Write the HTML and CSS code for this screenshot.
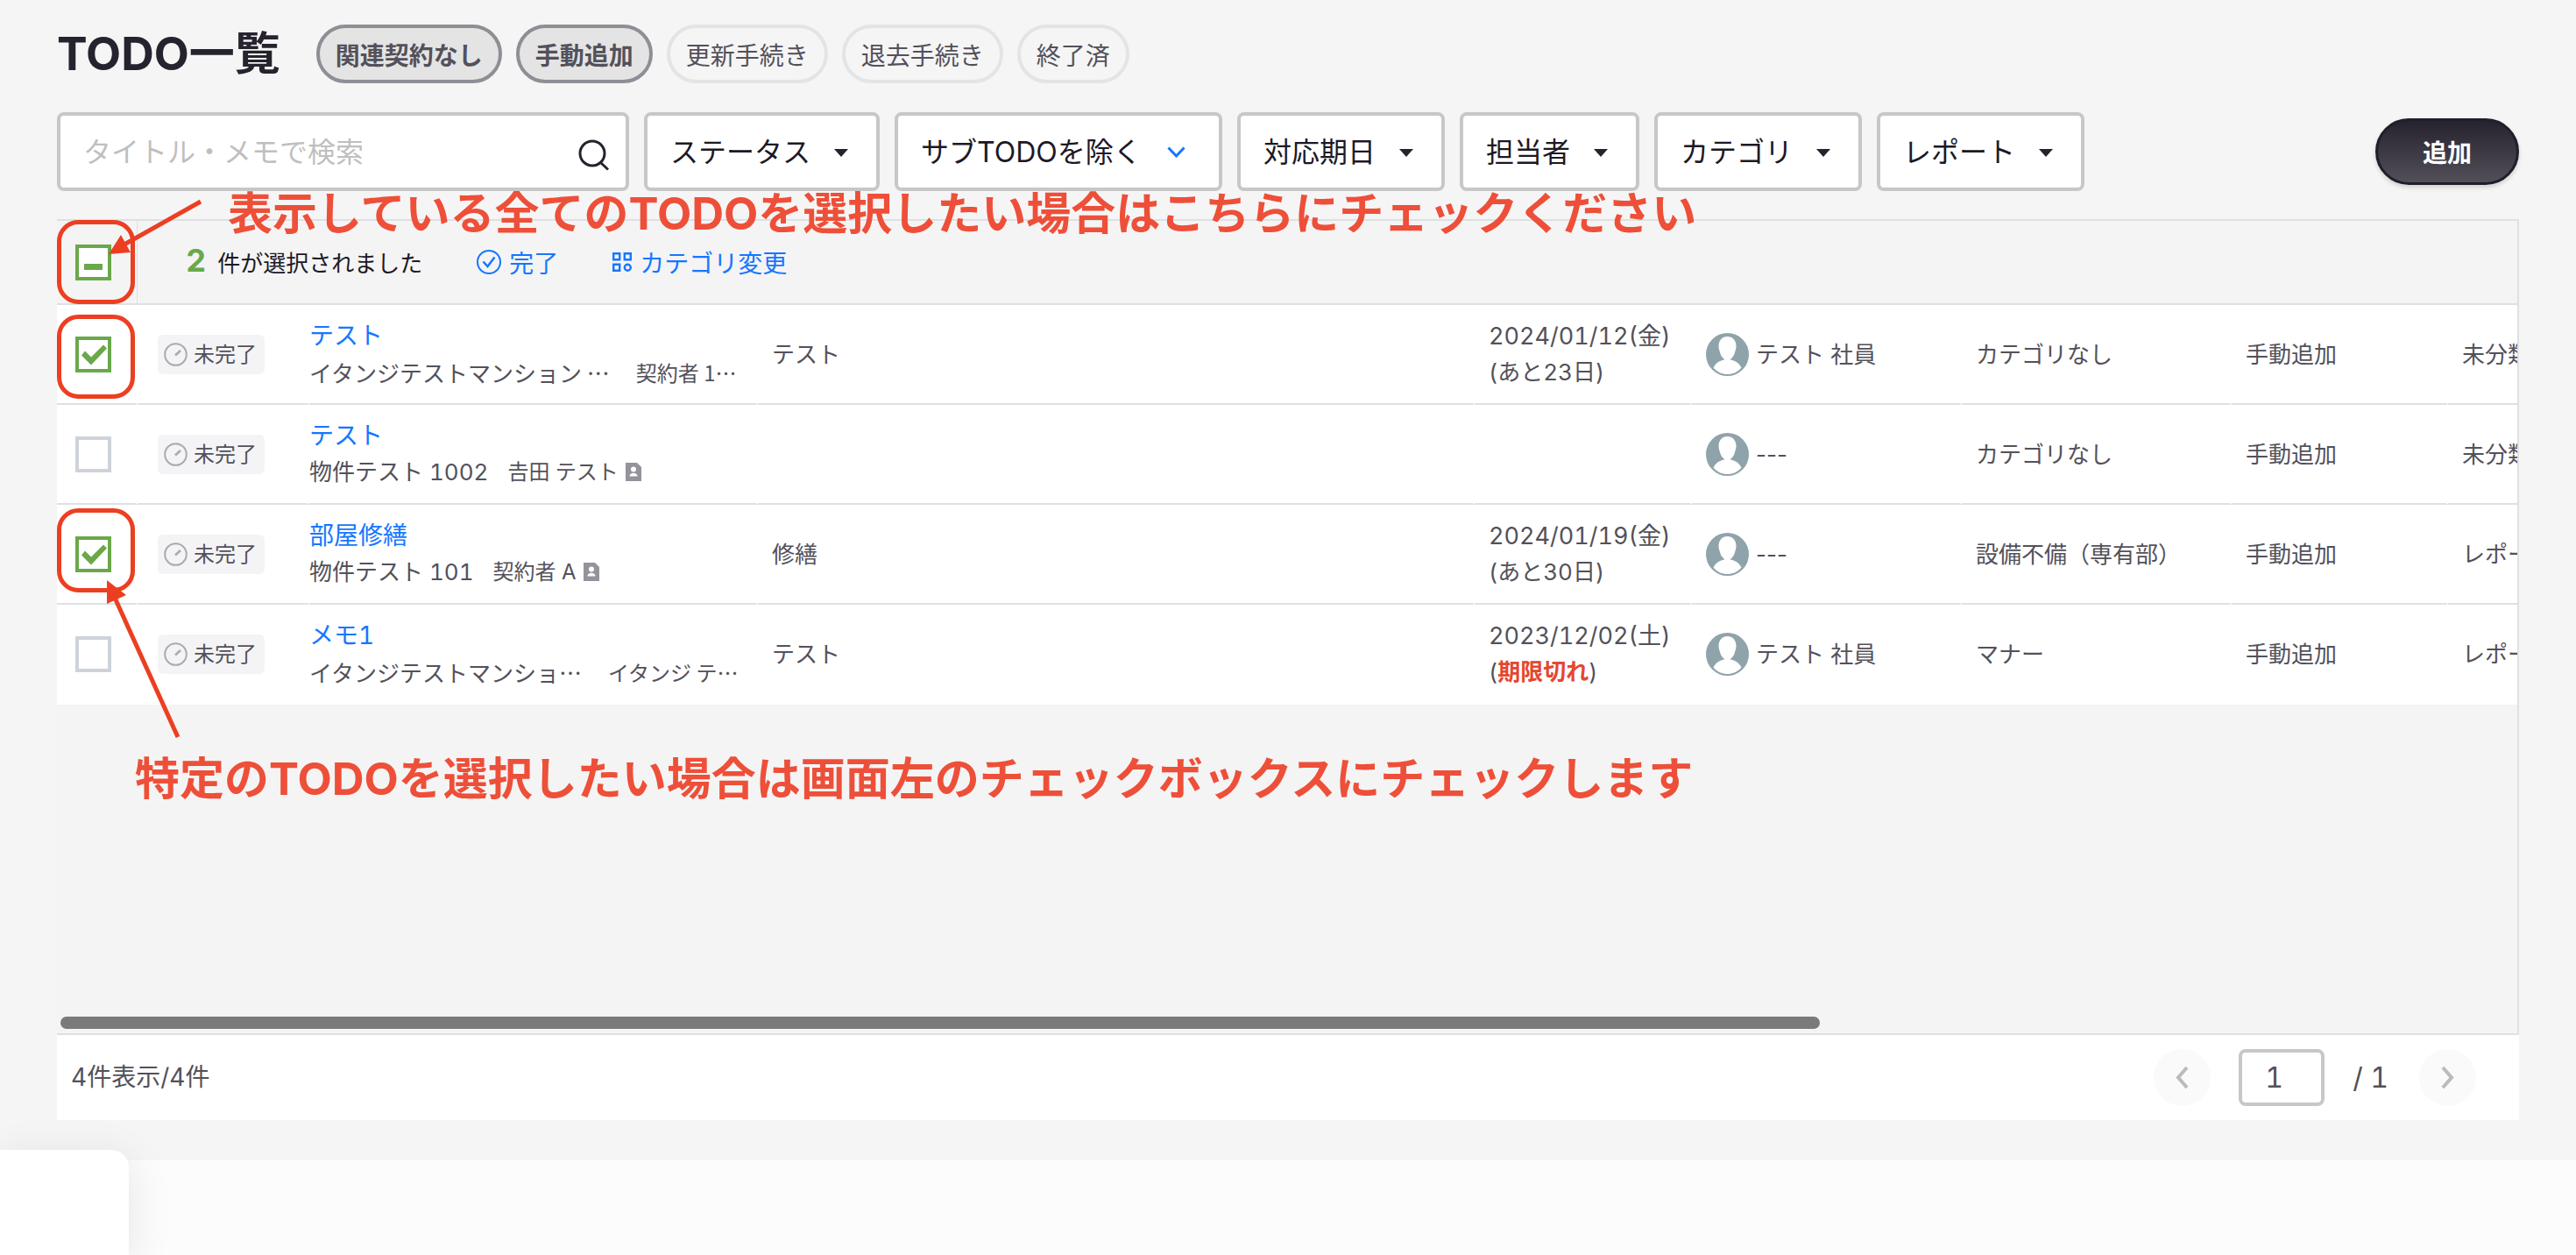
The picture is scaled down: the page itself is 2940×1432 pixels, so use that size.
FILE: index.html
```html
<!DOCTYPE html>
<html lang="ja">
<head>
<meta charset="utf-8">
<title>TODO一覧</title>
<link rel="stylesheet" href="styles.css">
</head>
<body>

<svg class="defs" aria-hidden="true">
  <symbol id="caret" viewBox="0 0 16 9"><path d="M0 0h16L8 9z" fill="#26232e"/></symbol>
  <symbol id="clock" viewBox="0 0 27 27">
    <circle cx="13.5" cy="13.5" r="12.3" fill="none" stroke="#aaa" stroke-width="2"/>
    <path d="M13 14.500l6-5.500" stroke="#aaa" stroke-width="2.600"/>
  </symbol>
  <symbol id="avatar" viewBox="0 0 49 49">
    <circle cx="24.500" cy="24.500" r="24.500" fill="#8fa3ab"/>
    <path d="M24.500 4c6 0 10 4.500 10 11 0 3-.8 4.500-1.500 7-.8 3.500-2.500 6-5.500 8.500 5.500.5 10.500 4 13 9-4 5-10 7.500-16 7.500s-12-2.500-16-7.500c2.500-5 7.500-8.500 13-9-3-2.500-4.700-5-5.500-8.500-.7-2.500-1.500-4-1.500-7 0-6.500 4-11 10-11z" fill="#fff"/>
  </symbol>
  <symbol id="contact" viewBox="0 0 18 21">
    <path d="M0 0h13l5 5v16H0z" fill="#94929b"/>
    <circle cx="9" cy="7.500" r="3" fill="#fff"/>
    <path d="M4.500 15.500c0-5 9-5 9 0z" fill="#fff"/>
  </symbol>
</svg>

<main class="page">
  <header class="head">
    <h1>TODO一覧</h1>
    <div class="chips">
      <button type="button" class="chip on">関連契約なし</button>
      <button type="button" class="chip on">手動追加</button>
      <button type="button" class="chip">更新手続き</button>
      <button type="button" class="chip">退去手続き</button>
      <button type="button" class="chip">終了済</button>
    </div>
  </header>

  <form class="filters">
    <div class="search">
      <input type="text" placeholder="タイトル・メモで検索" aria-label="タイトル・メモで検索">
      <svg width="36" height="36" viewBox="0 0 36 36" fill="none" stroke="#26232e" stroke-width="3"><circle cx="16" cy="16" r="14"/><path d="M25.500 26.500l8.500 8"/></svg>
    </div>
    <div class="filter"><select aria-label="ステータス"><option>ステータス</option></select><svg><use href="#caret"/></svg></div>
    <div class="filter wide"><select aria-label="サブTODO"><option>サブTODOを除く</option></select><svg viewBox="0 0 21 13"><path d="M1.500 1.500l9 9.500 9-9.500" fill="none" stroke="#1677ff" stroke-width="3"/></svg></div>
    <div class="filter"><select aria-label="対応期日"><option>対応期日</option></select><svg><use href="#caret"/></svg></div>
    <div class="filter"><select aria-label="担当者"><option>担当者</option></select><svg><use href="#caret"/></svg></div>
    <div class="filter"><select aria-label="カテゴリ"><option>カテゴリ</option></select><svg><use href="#caret"/></svg></div>
    <div class="filter"><select aria-label="レポート"><option>レポート</option></select><svg><use href="#caret"/></svg></div>
    <button type="button" class="add">追加</button>
  </form>

  <section class="list">
    <div class="scroll">
      <table>
        <colgroup>
          <col class="c-check"><col class="c-status"><col class="c-title"><col class="c-memo"><col class="c-date"><col class="c-user"><col class="c-cat"><col class="c-type"><col class="c-report">
        </colgroup>
        <thead>
          <tr>
            <th class="check"><input type="checkbox" class="some" aria-label="すべて選択"></th>
            <th colspan="8">
              <div class="selected">
                <p><b>2</b> 件が選択されました</p>
                <button type="button" class="action">
                  <svg width="28" height="28" viewBox="0 0 28 28" fill="none" stroke="#1677ff" stroke-width="2"><circle cx="14" cy="14" r="13"/><path d="M7.500 13.500l5 5.500 8-10.500" stroke-width="2.500"/></svg>
                  完了
                </button>
                <button type="button" class="action">
                  <svg width="22" height="22" viewBox="0 0 22 22" fill="none" stroke="#1677ff" stroke-width="2.400"><path d="M1.200 1.200h7v7h-7zM13.800 1.200h7v7h-7zM1.200 13.800h7v7h-7z"/><circle cx="17.300" cy="17.300" r="3.500"/></svg>
                  カテゴリ変更
                </button>
              </div>
            </th>
          </tr>
        </thead>
        <tbody>
          <tr>
            <td class="check"><input type="checkbox" checked aria-label="テスト"></td>
            <td class="status"><span class="badge"><svg><use href="#clock"/></svg>未完了</span></td>
            <td class="title"><a href="#">テスト</a><div class="sub"><span class="cut">イタンジテストマンション …</span><small class="cut">契約者 1…</small></div></td>
            <td>テスト</td>
            <td class="date"><time>2024/01/12(金)</time>(あと23日)</td>
            <td><div class="user"><svg><use href="#avatar"/></svg>テスト 社員</div></td>
            <td>カテゴリなし</td>
            <td>手動追加</td>
            <td>未分類</td>
          </tr>
          <tr>
            <td class="check"><input type="checkbox" aria-label="テスト"></td>
            <td class="status"><span class="badge"><svg><use href="#clock"/></svg>未完了</span></td>
            <td class="title"><a href="#">テスト</a><div class="sub"><span>物件テスト 1002</span><small>𠮷田 テスト</small><svg><use href="#contact"/></svg></div></td>
            <td></td>
            <td class="date"></td>
            <td><div class="user"><svg><use href="#avatar"/></svg>---</div></td>
            <td>カテゴリなし</td>
            <td>手動追加</td>
            <td>未分類</td>
          </tr>
          <tr>
            <td class="check"><input type="checkbox" checked aria-label="部屋修繕"></td>
            <td class="status"><span class="badge"><svg><use href="#clock"/></svg>未完了</span></td>
            <td class="title"><a href="#">部屋修繕</a><div class="sub"><span>物件テスト 101</span><small>契約者 A</small><svg><use href="#contact"/></svg></div></td>
            <td>修繕</td>
            <td class="date"><time>2024/01/19(金)</time>(あと30日)</td>
            <td><div class="user"><svg><use href="#avatar"/></svg>---</div></td>
            <td>設備不備（専有部）</td>
            <td>手動追加</td>
            <td>レポート</td>
          </tr>
          <tr>
            <td class="check"><input type="checkbox" aria-label="メモ1"></td>
            <td class="status"><span class="badge"><svg><use href="#clock"/></svg>未完了</span></td>
            <td class="title"><a href="#">メモ1</a><div class="sub"><span class="cut">イタンジテストマンショ…</span><small class="cut">イタンジ テ…</small></div></td>
            <td>テスト</td>
            <td class="date"><time>2023/12/02(土)</time>(<strong>期限切れ</strong>)</td>
            <td><div class="user"><svg><use href="#avatar"/></svg>テスト 社員</div></td>
            <td>マナー</td>
            <td>手動追加</td>
            <td>レポート</td>
          </tr>
        </tbody>
      </table>
      <div class="bar" style="width: 71.500%"></div>
    </div>

    <footer class="pager">
      <span class="count">4件表示/4件</span>
      <button type="button" class="nav" aria-label="前へ"><svg width="17" height="27" viewBox="0 0 17 27"><path d="M14 2L4 13.500 14 25" fill="none" stroke="#bbb" stroke-width="4"/></svg></button>
      <input type="text" value="1" aria-label="ページ">
      <span class="total">/ 1</span>
      <button type="button" class="nav" aria-label="次へ"><svg width="17" height="27" viewBox="0 0 17 27"><path d="M3 2l10 11.500L3 25" fill="none" stroke="#bbb" stroke-width="4"/></svg></button>
    </footer>
  </section>
</main>

<div class="drawer"></div>

<!-- notes drawn over the list -->
<div class="notes">
  <svg width="260" height="860" viewBox="0 0 260 860" fill="none" stroke="#ec3f22">
    <rect x="67.500" y="253.500" width="84" height="91" rx="22" stroke-width="5"/>
    <rect x="67.500" y="361.500" width="84" height="91" rx="22" stroke-width="5"/>
    <rect x="67.500" y="582.500" width="84" height="91" rx="22" stroke-width="5"/>
    <path d="M229 230L140 280M203 841L131 682" stroke-width="5"/>
    <path d="M124 290l14-22 11 20zM122 662v27l22-10z" fill="#ec3f22" stroke="none"/>
  </svg>
  <p class="note all">表示している全てのTODOを選択したい場合はこちらにチェックください</p>
  <p class="note one">特定のTODOを選択したい場合は画面左のチェックボックスにチェックします</p>
</div>

</body>
</html>
```
FILE: styles.css
```css
* { box-sizing: border-box; }
body {
  margin: 0;
  position: relative;
  min-height: 100vh;
  overflow: hidden;
  background: #fcfcfc;
  color: #53515a;
  font-family: Inter, "Noto Sans CJK JP", sans-serif;
  font-size: 26px;
  font-variant-numeric: tabular-nums;
  line-height: 41px;
}
p, h1 { margin: 0; }
button, input, select { font-family: inherit; font-variant-numeric: inherit; color: inherit; margin: 0; }
svg { flex: none; }
.defs { position: absolute; width: 0; height: 0; }

.page { padding: 28px 65px 46px; background: #f5f5f5; }

/* title and chips */
.head { display: flex; align-items: center; gap: 41px; height: 67px; }
h1 { color: #26232e; font-size: 52px; line-height: 67px; }
.chips { display: flex; gap: 16px; }
.chip {
  height: 67px;
  padding: 0 18px;
  border: 4px solid #e4e4e4;
  border-radius: 34px;
  background: none;
  font-size: 28px;
}
.chip.on { border-color: #8f8e95; background: #e4e4e4; font-weight: bold; }

/* search and filters */
.filters { display: flex; align-items: center; gap: 17px; margin-top: 33px; }
.search { position: relative; width: 653px; }
.search input, .filter select {
  display: block;
  width: 100%;
  height: 90px;
  border: 4px solid #c7c7c9;
  border-radius: 8px;
  background: #fff;
  color: #1c1926;
  font-size: 32px;
}
.search input { padding: 0 80px 0 26px; }
.search input::placeholder { color: #bfbfbf; }
.search svg { position: absolute; right: 22px; top: 31px; }
.filter { position: relative; }
.filter select { appearance: none; padding: 0 74px 0 26px; }
.filter svg { position: absolute; right: 36px; top: 42px; width: 16px; height: 9px; pointer-events: none; }
.filter.wide select { padding-right: 88px; }
.filter.wide svg { right: 42px; top: 39px; width: 21px; height: 13px; }
.add {
  height: 76px;
  margin-left: auto;
  padding: 0 51px;
  border: 3px solid #211e2b;
  border-radius: 38px;
  background: linear-gradient(#26232e, #524f59);
  box-shadow: 0 3px 5px rgba(0, 0, 0, .15);
  color: #fff;
  font-size: 28px;
  font-weight: bold;
}

/* list */
.list { margin-top: 32px; }
.scroll {
  display: flex;
  flex-direction: column;
  height: 931px;
  padding-bottom: 5px;
  overflow: hidden;
  border: solid #dde1e4;
  border-width: 2px 2px 2px 0;
  background: #f4f4f4;
}
table { width: 3040px; table-layout: fixed; border-collapse: separate; border-spacing: 0; }
.c-check { width: 92px; }
.c-status { width: 196px; }
.c-title { width: 512px; }
.c-memo { width: 818px; }
.c-date { width: 248px; }
.c-user { width: 308px; }
.c-cat { width: 308px; }
.c-type { width: 247px; }
th { height: 96px; padding: 0; border-bottom: 2px solid #dde1e4; font-weight: normal; text-align: left; }
th.check { border-right: 1px solid #dde1e4; }
td { height: 114px; padding: 0 0 0 16px; border-right: 2px solid #fff; border-bottom: 2px solid #dde1e4; background: #fff; white-space: nowrap; }
tr:last-child td { border-bottom-color: #fff; }
.check { padding: 0 0 0 21px; }

input[type=checkbox] {
  appearance: none;
  display: block;
  position: relative;
  width: 41px;
  height: 41px;
  border: 4px solid #cdd3d9;
  background: #fff;
}
input.some, input:checked { border-color: #6aa84a; }
input.some::before, input:checked::before {
  content: "";
  position: absolute;
  inset: 0;
  background: #6aa84a;
  clip-path: polygon(3px 18px, 7px 13px, 14px 20px, 28px 6px, 32px 10px, 14px 29px);
}
input.some::before { clip-path: none; inset: 18px 6px 8px; }

.selected { display: flex; align-items: center; padding-left: 55px; }
.selected p { color: #1c1926; }
.selected b { margin-right: 6px; color: #6aa84a; font-size: 36px; }
.action {
  display: flex;
  align-items: center;
  gap: 9px;
  margin-left: 62px;
  padding: 0;
  border: 0;
  background: none;
  color: #1677ff;
  font-size: 28px;
}

.status { padding-left: 23px; }
.badge { display: inline-flex; align-items: center; gap: 7px; height: 45px; padding: 0 9px 0 7px; border-radius: 6px; background: #f4f4f6; font-size: 24px; vertical-align: middle; }
.badge svg { width: 27px; height: 27px; }
.title { padding-left: 0; }
.title a { display: block; color: #1677ff; font-size: 28px; text-decoration: none; }
.sub { display: flex; align-items: center; }
.sub small { margin-left: 22px; font-size: 24px; }
.sub .cut { font-family: "Noto Sans CJK JP", sans-serif; }
.sub small.cut { margin-left: 30px; }
.sub svg { width: 18px; height: 21px; margin-left: 8px; }
time { display: block; font-size: 27px; }
strong { color: #e5472f; }
.user { display: flex; align-items: center; gap: 8px; font-variant-numeric: normal; }
.user svg { width: 49px; height: 49px; }

.bar { height: 14px; margin: auto 0 0 4px; border-radius: 7px; background: #7a7a7a; }

.pager { display: flex; align-items: center; height: 97px; padding: 0 49px 0 16px; background: #fff; }
.count { margin-right: auto; font-size: 28px; }
.nav { display: grid; place-items: center; width: 65px; height: 65px; padding: 0; border: 0; border-radius: 50%; background: #fafafa; }
.pager input { width: 98px; height: 65px; margin: 0 32px; padding: 0 26px; border: 4px solid #c7c7c9; border-radius: 8px; background: #fff; font-size: 32px; }
.total { margin-right: 35px; font-size: 32px; }

/* panel sliding in at the bottom left corner */
.drawer { position: absolute; left: 0; bottom: 0; width: 147px; height: 120px; border-radius: 0 20px 0 0; background: #fff; box-shadow: 0 10px 50px rgba(0, 0, 0, .1); }

.notes { position: absolute; left: 0; top: 0; pointer-events: none; }
.notes svg { display: block; }
.note { position: absolute; color: #ee4f39; font-size: 51px; font-weight: bold; line-height: 60px; white-space: nowrap; }
.note.all { left: 260px; top: 214px; }
.note.one { left: 154px; top: 859px; }
```
